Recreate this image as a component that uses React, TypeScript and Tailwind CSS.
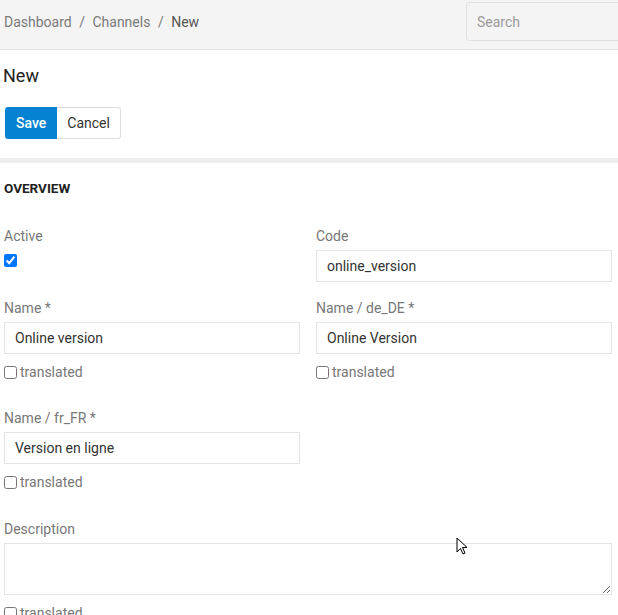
import React from 'react';

const font = { fontFamily: 'Roboto, "Liberation Sans", sans-serif' };

function Label({ children }: { children: React.ReactNode }) {
    return <div className="h-5 text-[14px] leading-5 text-[#777]">{children}</div>;
}

function TextInput({ value }: { value: string }) {
    return (
        <input
            defaultValue={value}
            className="mt-1 block w-full h-8 border border-[#e4e4e4] bg-white px-[10px] text-[14px] text-[#333] outline-none"
        />
    );
}

function Translated() {
    return (
        <label className="mt-2 flex h-5 items-center text-[14px] leading-5 text-[#777]">
            <input type="checkbox" className="m-0 mr-[3px] h-[13px] w-[13px]" />
            translated
        </label>
    );
}

export default function App() {
    return (
        <div style={font} className="relative h-[615px] w-[618px] overflow-hidden bg-white">
            <div className="flex h-[50px] overflow-hidden border-b border-[#e2e2e2] bg-[#f4f4f4]">
                <div className="flex-1 pl-1 pt-[12px] text-[14px] leading-5 text-[#7a7a7a]">
                    Dashboard <span className="mx-[4px]">/</span> Channels <span className="mx-[4px]">/</span>{' '}
                    <span className="text-[#555]">New</span>
                </div>
                <div className="mt-[2px] h-[39px] w-[200px] shrink-0 -mr-[48px] rounded-[3px] border border-[#e0e0e0] bg-[#f4f4f4] pl-[10px] text-[14px] leading-[39px] text-[#9a9a9a]">
                    Search
                </div>
            </div>

            <h1 className="pl-[3px] pt-[14px] text-[18px] leading-6 text-[#222]">New</h1>

            <div className="ml-[5px] mt-[19px] flex h-8">
                <button className="h-8 rounded-l-[3px] bg-[#0583d2] px-[11px] text-[14px] font-medium text-white">Save</button>
                <button className="h-8 rounded-r-[3px] border border-l-0 border-[#dcdcdc] bg-white px-[10px] text-[14px] text-[#333]">Cancel</button>
            </div>

            <div className="mt-[19px] h-[5px] bg-[#eeeeee]" />

            <div className="pl-1 pr-[6px]">
                <div className="pt-[15px] text-[13.5px] font-bold leading-5 text-[#222]">OVERVIEW</div>

                <div className="mt-[28px] grid grid-cols-2 gap-x-4">
                    <div className="mb-4">
                        <Label>Active</Label>
                        <input type="checkbox" defaultChecked className="m-0 mt-2 block h-[13px] w-[13px]" />
                    </div>
                    <div className="mb-4">
                        <Label>Code</Label>
                        <TextInput value="online_version" />
                    </div>

                    <div className="mb-[26px]">
                        <Label>Name *</Label>
                        <TextInput value="Online version" />
                        <Translated />
                    </div>
                    <div className="mb-[26px]">
                        <Label>Name / de_DE *</Label>
                        <TextInput value="Online Version" />
                        <Translated />
                    </div>

                    <div className="mb-[27px]">
                        <Label>Name / fr_FR *</Label>
                        <TextInput value="Version en ligne" />
                        <Translated />
                    </div>
                    <div />
                </div>

                <Label>Description</Label>
                <textarea className="mt-1 block h-[52px] w-full border border-[#e4e4e4] bg-white px-[10px] text-[14px] text-[#333] outline-none" />
                <Translated />
            </div>

            {/* mouse pointer */}
            <svg className="absolute left-[456px] top-[537px]" width="12" height="19" viewBox="0 0 12 19">
                <path d="M1 1 L1 15 L4.5 11.5 L7 17 L9 16 L6.5 10.5 L11 10.5 Z" fill="#fff" stroke="#000" strokeWidth="1" strokeLinejoin="round" />
            </svg>
        </div>
    );
}
